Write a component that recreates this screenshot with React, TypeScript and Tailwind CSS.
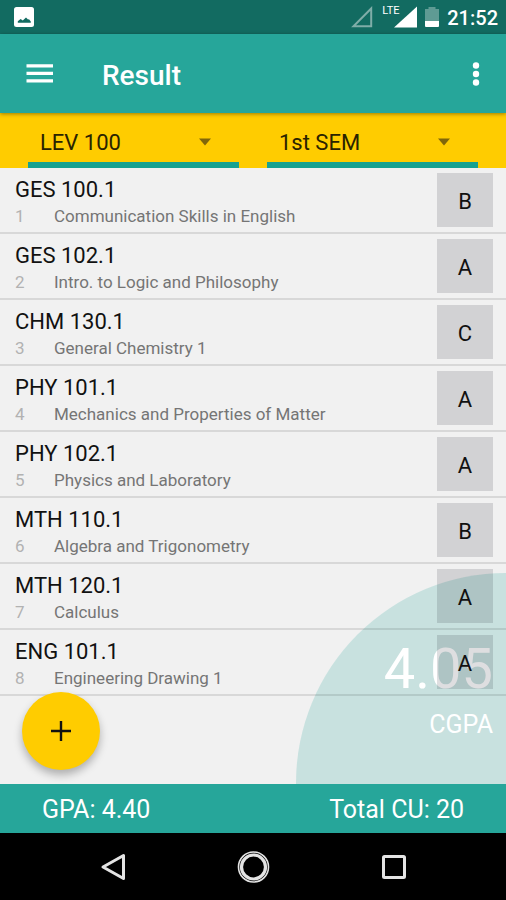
import React, { FC, useState } from "react";

interface Course {
  code: string;
  title: string;
  grade: string;
}

const courses: Course[] = [
  { code: "GES 100.1", title: "Communication Skills in English", grade: "B" },
  { code: "GES 102.1", title: "Intro. to Logic and Philosophy", grade: "A" },
  { code: "CHM 130.1", title: "General Chemistry 1", grade: "C" },
  { code: "PHY 101.1", title: "Mechanics and Properties of Matter", grade: "A" },
  { code: "PHY 102.1", title: "Physics and Laboratory", grade: "A" },
  { code: "MTH 110.1", title: "Algebra and Trigonometry", grade: "B" },
  { code: "MTH 120.1", title: "Calculus", grade: "A" },
  { code: "ENG 101.1", title: "Engineering Drawing 1", grade: "A" },
];

const StatusBar: FC = () => {
  return (
    <div className="flex h-[34px] items-center justify-between bg-[#126b61] pl-[14px] pr-2 text-white">
      <svg width="20" height="20" viewBox="0 0 20 20" aria-hidden="true">
        <rect width="20" height="20" rx="2.5" fill="#fff" />
        <path d="M3.8 15.8V14.2L6.6 12 8.8 13.4 12 10.6 14 12.6 15 12.2 16.8 14.6V15.8Z" fill="#126b61" />
      </svg>
      <div className="flex items-center">
        <svg width="22" height="22" viewBox="0 0 22 22" aria-hidden="true">
          <path d="M2.5 20.2H20.2V2.5Z" fill="none" stroke="#7fada8" strokeWidth="2" />
        </svg>
        <div className="relative ml-5 h-[22px] w-6">
          <svg width="24" height="22" viewBox="0 0 24 22" aria-hidden="true">
            <path d="M1 21.5H24V.5Z" fill="#fff" />
          </svg>
          <span className="absolute -left-[11px] -top-[1px] text-[11px] leading-[11px]">LTE</span>
        </div>
        <svg className="ml-2" width="14" height="20" viewBox="0 0 14 20" aria-hidden="true">
          <path d="M3.5 0H10.5V2H14V14H0V2H3.5Z" fill="#5f9b94" />
          <path d="M0 14H14V19Q14 20 13 20H1Q0 20 0 19Z" fill="#fff" />
        </svg>
        <span className="ml-2 pt-[2px] text-[20px] font-medium leading-6">21:52</span>
      </div>
    </div>
  );
};

const Header: FC = () => {
  return (
    <header className="relative z-20 flex h-[79px] items-center bg-[#26a69a] pl-[26px] pr-4 text-white shadow-[0_1px_4px_rgba(0,0,0,0.4)]">
      <button type="button" aria-label="Menu" className="cursor-pointer">
        <svg width="28" height="20" viewBox="0 0 28 20">
          <path d="M.5 1.8H27M.5 9.3H27M.5 16.8H27" stroke="#fff" strokeWidth="3.2" />
        </svg>
      </button>
      <h1 className="ml-12 flex-1 pt-1 text-[28px] font-medium leading-8">Result</h1>
      <button type="button" aria-label="More options" className="flex w-7 cursor-pointer justify-center">
        <svg width="8" height="26" viewBox="0 0 8 26">
          <circle cx="4" cy="4.5" r="3.2" fill="#fff" />
          <circle cx="4" cy="13" r="3.2" fill="#fff" />
          <circle cx="4" cy="21.5" r="3.2" fill="#fff" />
        </svg>
      </button>
    </header>
  );
};

interface PickerProps {
  label: string;
  options: string[];
}

const Picker: FC<PickerProps> = ({ label, options }) => {
  const [value, setValue] = useState(options[0]);
  return (
    <label className="relative flex flex-1 border-b-6 border-[#17a190]">
      <select
        aria-label={label}
        value={value}
        onChange={(e) => setValue(e.target.value)}
        className="w-full cursor-pointer appearance-none bg-transparent pl-3 pt-[10px] text-[22px] text-[#2a2300] outline-none"
      >
        {options.map((option) => (
          <option key={option}>{option}</option>
        ))}
      </select>
      <svg
        className="pointer-events-none absolute right-7 top-[25px]"
        width="12"
        height="8"
        viewBox="0 0 12 8"
        aria-hidden="true"
      >
        <path d="M0 .5H12L6 7.5Z" fill="#80660a" />
      </svg>
    </label>
  );
};

const CourseRow: FC<{ course: Course; index: number }> = ({ course, index }) => {
  return (
    <li className="flex h-[66px] items-center justify-between border-b-2 border-black/10 pl-[15px] pr-[13px]">
      <div className="pt-1">
        <p className="text-[22px] leading-7 text-[#111]">{course.code}</p>
        <div className="flex text-[17px] leading-6">
          <span className="w-[39px] text-[#b2b2b2]">{index + 1}</span>
          <span className="text-[#757575]">{course.title}</span>
        </div>
      </div>
      <button
        type="button"
        aria-label={`Grade for ${course.code}: ${course.grade}`}
        className="h-[54px] w-14 cursor-pointer bg-[#000010]/13 pt-[2px] text-[22px] text-[#111]"
      >
        {course.grade}
      </button>
    </li>
  );
};

const NavBar: FC = () => {
  return (
    <nav className="flex h-[67px] items-center justify-around bg-black px-11">
      <button type="button" aria-label="Back" className="cursor-pointer">
        <svg width="28" height="32" viewBox="0 0 28 32">
          <path d="M4 16 24.5 4.5V27.5Z" fill="none" stroke="#e4e4e4" strokeWidth="3" strokeLinejoin="round" />
        </svg>
      </button>
      <button type="button" aria-label="Home" className="cursor-pointer">
        <svg width="34" height="34" viewBox="0 0 34 34">
          <circle cx="17.5" cy="17" r="15" fill="none" stroke="#e4e4e4" strokeWidth="1.6" />
          <circle cx="17.5" cy="17" r="12" fill="none" stroke="#e4e4e4" strokeWidth="3.2" />
        </svg>
      </button>
      <button type="button" aria-label="Recent apps" className="cursor-pointer">
        <svg width="28" height="28" viewBox="0 0 28 28">
          <rect x="4.5" y="3.5" width="21" height="21" rx="1" fill="none" stroke="#e4e4e4" strokeWidth="3" />
        </svg>
      </button>
    </nav>
  );
};

const App: FC = () => {
  return (
    <div className="flex min-h-screen flex-col bg-[#f1f1f1] font-[Roboto,sans-serif]">
      <StatusBar />
      <Header />
      <div className="flex h-[55px] gap-7 bg-[#ffcc00] px-7">
        <Picker label="Level" options={["LEV 100", "LEV 200", "LEV 300", "LEV 400"]} />
        <Picker label="Semester" options={["1st SEM", "2nd SEM"]} />
      </div>
      <main className="relative flex-1">
        {/* cgpa quarter circle, the rows are drawn over it */}
        <div className="absolute bottom-0 right-0 flex h-[211px] w-[210px] flex-col items-end rounded-tl-full bg-[#26a69a]/20 pr-[13px] pt-16 text-white">
          <span className="text-[56px] leading-[64px]">4.05</span>
          <span className="mt-2 text-[25px] leading-8">CGPA</span>
        </div>
        <ul className="relative pb-[88px]">
          {courses.map((course, index) => (
            <CourseRow key={course.code} course={course} index={index} />
          ))}
        </ul>
        <button
          type="button"
          aria-label="Add course"
          className="absolute bottom-[14px] left-[22px] flex size-[78px] cursor-pointer items-center justify-center rounded-full bg-[#ffcc00] shadow-[0_5px_8px_rgba(0,0,0,0.28)]"
        >
          <svg width="20" height="20" viewBox="0 0 20 20">
            <path d="M10 0V20M0 10H20" stroke="#111" strokeWidth="2.4" />
          </svg>
        </button>
      </main>
      <footer className="flex h-[49px] items-center justify-between bg-[#26a69a] px-[42px] pt-[2px] text-[25px] leading-8 text-white">
        <span>GPA: 4.40</span>
        <span>Total CU: 20</span>
      </footer>
      <NavBar />
    </div>
  );
};

export default App;
